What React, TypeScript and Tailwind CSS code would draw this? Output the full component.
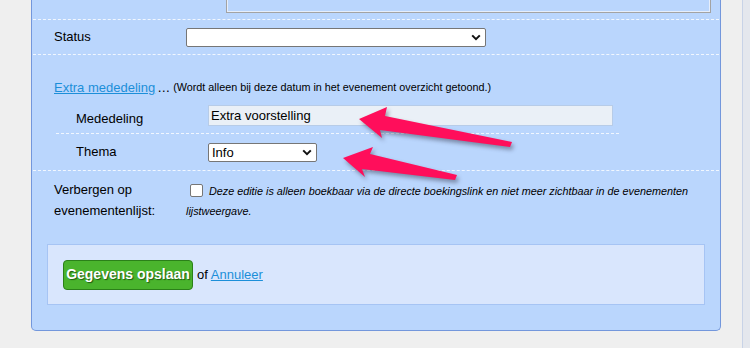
const Chevron = () => (
  <svg width="10" height="7" viewBox="0 0 10 7" className="shrink-0">
    <path d="M1.2 1.4 L5 5.2 L8.8 1.4" fill="none" stroke="#111" strokeWidth="2" />
  </svg>
);

const FakeSelect = ({ value, className }: { value?: string; className: string }) => (
  <div
    className={`flex items-center justify-between bg-white border border-[#767676] rounded-[2px] pl-[3px] pr-[4px] ${className}`}
  >
    <span className="text-[13px] leading-none">{value}</span>
    <Chevron />
  </div>
);

const Arrows = () => (
  <svg
    width="750"
    height="348"
    className="absolute left-0 top-0 pointer-events-none [filter:drop-shadow(2px_3px_2px_rgba(40,40,60,0.45))]"
  >
    <polygon
      points="359,119 387,107 385,116 512,142 510,147 380,130 382,138"
      fill="#ff0e5b"
    />
    <polygon
      points="343,158 373,147 370,154 457,175 455,180 362,169 365,177"
      fill="#ff0e5b"
    />
  </svg>
);

const App = () => {
  return (
    <div className="relative min-h-screen bg-[#efefef] flex font-['Liberation_Sans',Arial,sans-serif] text-[13px] text-black">
      <div className="ml-[31px] w-[690px] h-[331px] bg-[#bad6fd] border-x border-b border-[#7397dc] rounded-b-[5px] flex flex-col">
        {/* bottom of textarea from the row above */}
        <div className="h-[20px] mx-px border-b border-dashed border-white/80">
          <div className="ml-[193px] w-[485px] h-[13px] border border-t-0 border-[#a3a3a3]">
            <div className="h-full border border-t-0 border-[#e6eefb]" />
          </div>
        </div>

        <div className="h-[35px] mx-px flex items-center border-b border-dashed border-white/80">
          <div className="w-[153px] pl-[21px]">Status</div>
          <FakeSelect className="w-[300px] h-[19px]" />
        </div>

        <div className="mt-[25px] h-[15px] pl-[22px] flex items-center whitespace-nowrap">
          <a href="#" className="text-[#1c8fd9] underline">
            Extra mededeling
          </a>
          <span className="ml-[2px]">…</span>
          <span className="ml-[3px] text-[10.8px]">
            (Wordt alleen bij deze datum in het evenement overzicht getoond.)
          </span>
        </div>

        <div className="mt-[6px] ml-[24px] w-[563px] h-[33px] pt-[4px] flex items-start border-b border-dashed border-white/80">
          <div className="w-[152px] pl-[20px] pt-[4px]">Mededeling</div>
          <div className="w-[405px] h-[21px] bg-[#eaf0f7] border border-[#b7cce8] pl-[2px] flex items-center text-[13px]">
            Extra voorstelling
          </div>
        </div>

        <div className="h-[37px] mx-px flex items-center border-b border-dashed border-white/80">
          <div className="w-[175px] pl-[43px]">Thema</div>
          <FakeSelect value="Info" className="w-[109px] h-[19px]" />
        </div>

        <div className="h-[73px] pt-[8px] flex items-start">
          <div className="w-[154px] pl-[22px] leading-[21px]">
            Verbergen op
            <br />
            evenementenlijst:
          </div>
          <div className="w-[520px] text-[10.8px] italic leading-[20px] pt-[2px]">
            <span className="inline-block align-[-2px] w-[13px] h-[13px] ml-[4px] mr-[6px] bg-white border border-[#767676] rounded-[2px]" />
            Deze editie is alleen boekbaar via de directe boekingslink en niet meer zichtbaar in de
            evenementen lijstweergave.
          </div>
        </div>

        <div className="ml-[15px] w-[658px] h-[61px] border border-[#a6c4f4] bg-[#d9e6fd] flex items-center pl-[15px]">
          <button className="w-[130px] h-[30px] bg-[#4ab42d] border border-[#2b8019] rounded-[4px] text-white font-bold text-[14px] [text-shadow:1px_1px_1px_#1f5a12]">
            Gegevens opslaan
          </button>
          <span className="ml-[4px]">of</span>
          <a href="#" className="ml-[3px] text-[#1c8fd9] underline">
            Annuleer
          </a>
        </div>
      </div>

      <div className="ml-[21px] w-[8px] border-l border-[#c8d3e7] bg-[#e4e7ed]" />

      <Arrows />
    </div>
  );
};

export default App;
